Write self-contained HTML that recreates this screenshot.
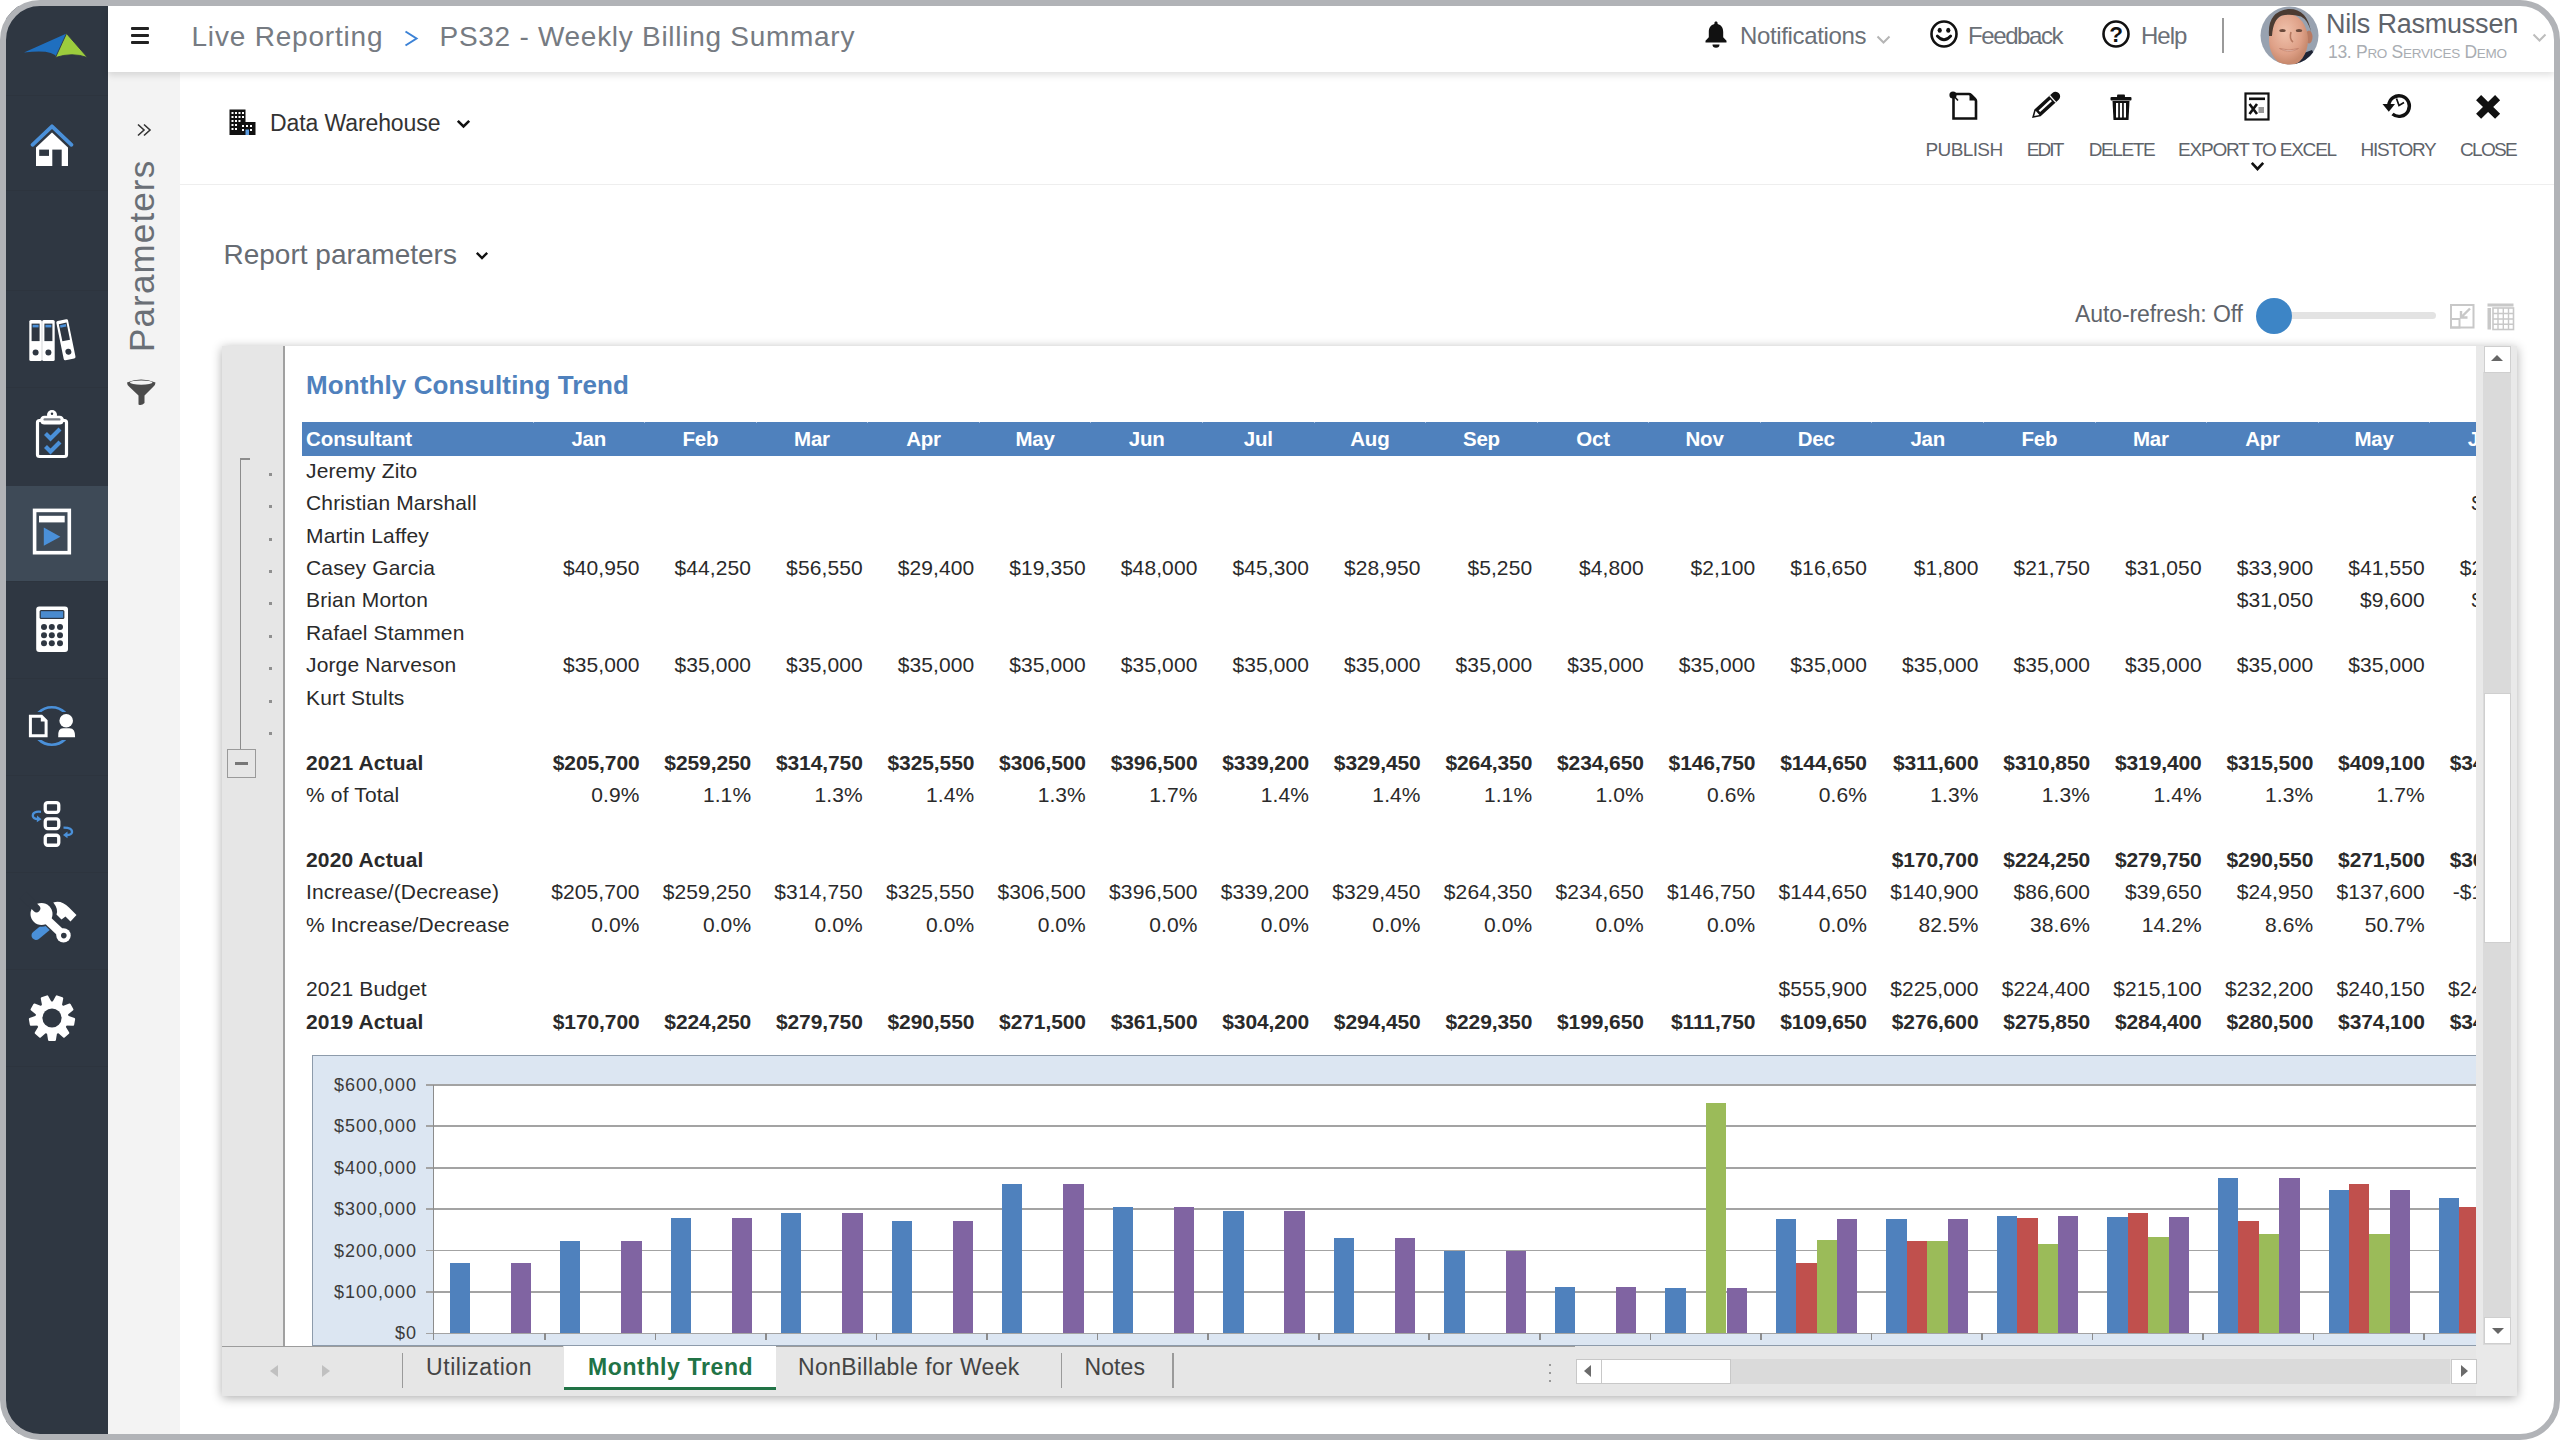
<!DOCTYPE html>
<html><head><meta charset="utf-8"><style>
html,body{margin:0;padding:0;width:2560px;height:1440px;overflow:hidden;background:#fff;}
#frame{position:absolute;left:0;top:0;width:2560px;height:1440px;border-radius:40px;overflow:hidden;background:#fff;}
#border{position:absolute;left:0;top:0;width:2548px;height:1428px;border:6px solid #b1b3b7;border-radius:40px;z-index:50;pointer-events:none;}
.t{position:absolute;white-space:nowrap;line-height:1;font-family:"Liberation Sans", sans-serif;}
svg{position:absolute;overflow:visible;}
</style></head><body>
<div id="frame">
<div style="position:absolute;left:6px;top:6px;width:102px;height:1428px;background:#2f3742;"></div>
<div style="position:absolute;left:108px;top:72px;width:72px;height:1362px;background:#f3f3f3;"></div>
<div style="position:absolute;left:108px;top:6px;width:2446px;height:66px;background:#fff;box-shadow:0 3px 7px rgba(0,0,0,0.13);z-index:2;"></div>
<div style="position:absolute;left:6px;top:95px;width:102px;height:1px;background:#2c333d;opacity:0.7;"></div>
<div style="position:absolute;left:6px;top:190px;width:102px;height:1px;background:#2c333d;opacity:0.7;"></div>
<div style="position:absolute;left:6px;top:290px;width:102px;height:1px;background:#2c333d;opacity:0.7;"></div>
<div style="position:absolute;left:6px;top:387px;width:102px;height:1px;background:#2c333d;opacity:0.7;"></div>
<div style="position:absolute;left:6px;top:581px;width:102px;height:1px;background:#2c333d;opacity:0.7;"></div>
<div style="position:absolute;left:6px;top:678px;width:102px;height:1px;background:#2c333d;opacity:0.7;"></div>
<div style="position:absolute;left:6px;top:775px;width:102px;height:1px;background:#2c333d;opacity:0.7;"></div>
<div style="position:absolute;left:6px;top:872px;width:102px;height:1px;background:#2c333d;opacity:0.7;"></div>
<div style="position:absolute;left:6px;top:969px;width:102px;height:1px;background:#2c333d;opacity:0.7;"></div>
<div style="position:absolute;left:6px;top:1066px;width:102px;height:1px;background:#2c333d;opacity:0.7;"></div>
<div style="position:absolute;left:6px;top:486px;width:102px;height:95px;background:#3e4a57;"></div>
<div style="position:absolute;left:180px;top:184px;width:2374px;height:1px;background:#eeeeee;"></div>
<div style="position:absolute;left:131px;top:27px;width:18px;height:2.6px;background:#222;border-radius:1px;z-index:3;"></div>
<div style="position:absolute;left:131px;top:34px;width:18px;height:2.6px;background:#222;border-radius:1px;z-index:3;"></div>
<div style="position:absolute;left:131px;top:41px;width:18px;height:2.6px;background:#222;border-radius:1px;z-index:3;"></div>
<div class="t" style="left:191.50px;top:23.30px;font-size:28px;color:#767b82;font-weight:normal;z-index:3;letter-spacing:0.8px;">Live Reporting</div>
<svg style="left:404px;top:30px;z-index:3" width="14" height="17" viewBox="0 0 14 17"><path d="M1.5 1.5 L12.5 8.5 L1.5 15.5" fill="none" stroke="#3b82d6" stroke-width="2"/></svg>
<div class="t" style="left:439.50px;top:23.30px;font-size:28px;color:#767b82;font-weight:normal;z-index:3;letter-spacing:0.72px;">PS32 - Weekly Billing Summary</div>
<svg style="left:1704px;top:20px;z-index:3" width="24" height="28" viewBox="0 0 24 28">
<path d="M12 1.5c1 0 1.6.7 1.6 1.5v1c3.6.8 5.6 3.8 5.6 8v5.2l3.3 3.6v1.6H1.5v-1.6l3.3-3.6V12c0-4.2 2-7.2 5.6-8V3c0-.8.6-1.5 1.6-1.5z" fill="#111"/>
<path d="M8.5 24.5a3.5 3.2 0 0 0 7 0z" fill="#111"/></svg>
<div class="t" style="left:1740.00px;top:23.68px;font-size:24px;color:#6b7077;font-weight:normal;z-index:3;letter-spacing:-0.35px;">Notifications</div>
<svg style="left:1876px;top:35px;z-index:3" width="15" height="10" viewBox="0 0 15 10"><path d="M1.5 1.5 L7.5 7.5 L13.5 1.5" fill="none" stroke="#b5b5b5" stroke-width="2"/></svg>
<svg style="left:1930px;top:20px;z-index:3" width="28" height="28" viewBox="0 0 28 28">
<circle cx="14" cy="14" r="12.5" fill="none" stroke="#111" stroke-width="2.6"/>
<ellipse cx="9.7" cy="10.3" rx="2.1" ry="2.5" fill="#111"/><ellipse cx="18.3" cy="10.3" rx="2.1" ry="2.5" fill="#111"/>
<path d="M7.3 16 Q14 23.5 20.7 16" fill="none" stroke="#111" stroke-width="2.8" stroke-linecap="round"/></svg>
<div class="t" style="left:1968.00px;top:23.68px;font-size:24px;color:#6b7077;font-weight:normal;z-index:3;letter-spacing:-1.4px;">Feedback</div>
<svg style="left:2102px;top:20px;z-index:3" width="28" height="28" viewBox="0 0 28 28">
<circle cx="14" cy="14" r="12.5" fill="none" stroke="#111" stroke-width="2.6"/>
<text x="14.2" y="22.3" text-anchor="middle" font-family="Liberation Sans" font-weight="bold" font-size="22.5" fill="#111">?</text></svg>
<div class="t" style="left:2141.00px;top:23.68px;font-size:24px;color:#6b7077;font-weight:normal;z-index:3;letter-spacing:-1.0px;">Help</div>
<div style="position:absolute;left:2222px;top:18px;width:2px;height:35px;background:#9a9a9a;z-index:3;"></div>
<svg style="left:2259.5px;top:5.5px;z-index:3" width="59" height="59" viewBox="0 0 59 59">
<defs><clipPath id="av"><circle cx="29.5" cy="29.5" r="29"/></clipPath>
<radialGradient id="skin" cx="0.42" cy="0.35" r="0.6"><stop offset="0" stop-color="#f0c2ac"/><stop offset="0.7" stop-color="#dea087"/><stop offset="1" stop-color="#c98a6e"/></radialGradient></defs>
<g clip-path="url(#av)">
<rect width="59" height="59" fill="#98a2b0"/>
<path d="M36 50 L52 44 L60 60 L34 60 Z" fill="#1f2535"/>
<ellipse cx="49" cy="31" rx="3.5" ry="6.5" fill="#b87a62"/>
<ellipse cx="28.5" cy="34" rx="19.5" ry="26" fill="url(#skin)"/>
<path d="M9 30 Q7 6 28 3 Q47 2 51 26 Q48 14 41 10.5 Q31 7.5 22 9.5 Q13 13 12 30 Z" fill="#4b3b32"/>
<ellipse cx="22.5" cy="24.5" rx="3.2" ry="1.6" fill="#6b4a3c"/><ellipse cx="39" cy="24.5" rx="3.2" ry="1.6" fill="#6b4a3c"/>
<path d="M31 26 Q29 33 33 36" fill="none" stroke="#b57860" stroke-width="1.6"/>
<path d="M19.5 42.5 Q29 48 38.5 42.5 Q29 45.5 19.5 42.5 Z" fill="#f3d6cc" stroke="#c07f6a" stroke-width="0.8"/>
</g></svg>
<div class="t" style="left:2326.00px;top:11.14px;font-size:27px;color:#5f646b;font-weight:normal;z-index:3;letter-spacing:-0.22px;">Nils Rasmussen</div>
<div class="t" style="left:2328.00px;top:43.69px;font-size:17.5px;color:#a9adb2;font-weight:normal;z-index:3;letter-spacing:-0.3px;">13. P<span style="font-size:13.5px">RO</span> S<span style="font-size:13.5px">ERVICES</span> D<span style="font-size:13.5px">EMO</span></div>
<svg style="left:2532px;top:33px;z-index:3" width="15" height="10" viewBox="0 0 15 10"><path d="M1.5 1.5 L7.5 7.5 L13.5 1.5" fill="none" stroke="#bdbdbd" stroke-width="2"/></svg>
<svg style="left:136px;top:123px" width="16" height="14" viewBox="0 0 16 14"><path d="M2 1.5 L8 7 L2 12.5 M8 1.5 L14 7 L8 12.5" fill="none" stroke="#333" stroke-width="1.6"/></svg>
<div class="t" style="left:124.37px;top:352px;font-size:35px;color:#6a6f76;transform-origin:0 0;transform:rotate(-90deg) translateX(0);letter-spacing:1.14px;">Parameters</div>
<svg style="left:126px;top:377px" width="31" height="30" viewBox="0 0 31 30">
<path d="M1 5.5 Q15 -0.5 29.5 5.5 Q29.5 7.5 27.5 9.5 L18.5 18.5 L18.5 26 Q15.5 29 12.5 27.5 L12.5 18.5 L3 9.5 Q1 7.5 1 5.5 Z" fill="#4b4b4b"/>
<ellipse cx="15.2" cy="5.6" rx="11.3" ry="2.1" fill="#f4f4f4"/></svg>
<svg style="left:229px;top:109px" width="27" height="27" viewBox="0 0 27 27">
<rect x="0.5" y="0.5" width="16" height="25.5" fill="#111"/>
<rect x="11" y="13" width="15.5" height="13" fill="#111"/>
<g fill="#fff">
<rect x="2.5" y="3" width="2" height="2"/><rect x="6" y="3" width="2" height="2"/><rect x="9.5" y="3" width="2" height="2"/><rect x="13" y="3" width="2" height="2"/>
<rect x="2.5" y="7" width="2" height="2"/><rect x="6" y="7" width="2" height="2"/><rect x="9.5" y="7" width="2" height="2"/><rect x="13" y="7" width="2" height="2"/>
<rect x="2.5" y="11" width="2" height="2"/><rect x="6" y="11" width="2" height="2"/><rect x="9.5" y="11" width="2" height="2"/>
<rect x="2.5" y="15" width="2" height="2"/><rect x="6" y="15" width="2" height="2"/>
<rect x="2.5" y="19" width="2" height="2"/><rect x="6" y="19" width="2" height="2"/>
<rect x="13" y="16" width="2" height="2"/><rect x="17" y="16" width="2" height="2"/><rect x="21" y="16" width="2" height="2"/>
<rect x="13" y="20" width="2" height="2"/><rect x="21" y="20" width="2" height="2"/>
</g><rect x="16.5" y="20.5" width="3.5" height="5.5" fill="#5b9be0"/></svg>
<div class="t" style="left:270.00px;top:111.53px;font-size:23px;color:#333;font-weight:normal;letter-spacing:-0.1px;">Data Warehouse</div>
<svg style="left:456px;top:119px" width="15" height="10" viewBox="0 0 15 10"><path d="M1.8 1.8 L7.5 7.5 L13.2 1.8" fill="none" stroke="#111" stroke-width="2.6"/></svg>
<div class="t" style="left:1864.00px;width:200px;text-align:center;top:139.52px;font-size:19px;color:#5f646b;font-weight:normal;letter-spacing:-0.6px;">PUBLISH</div>
<div class="t" style="left:1994.50px;width:100px;text-align:center;top:139.52px;font-size:19px;color:#5f646b;font-weight:normal;letter-spacing:-1.9px;">EDIT</div>
<div class="t" style="left:2071.50px;width:100px;text-align:center;top:139.52px;font-size:19px;color:#5f646b;font-weight:normal;letter-spacing:-1.4px;">DELETE</div>
<div class="t" style="left:2147.00px;width:220px;text-align:center;top:139.52px;font-size:19px;color:#5f646b;font-weight:normal;letter-spacing:-1.2px;">EXPORT TO EXCEL</div>
<div class="t" style="left:2338.00px;width:120px;text-align:center;top:139.52px;font-size:19px;color:#5f646b;font-weight:normal;letter-spacing:-1.27px;">HISTORY</div>
<div class="t" style="left:2438.00px;width:100px;text-align:center;top:139.52px;font-size:19px;color:#5f646b;font-weight:normal;letter-spacing:-1.7px;">CLOSE</div>
<svg style="left:1948px;top:90px" width="30" height="31" viewBox="0 0 30 31">
<path d="M5.5 4 H21 Q22 4 23 5 L27 9 Q28 10 28 11 V28.5 H5.5 Z" fill="none" stroke="#111" stroke-width="2.6"/>
<path d="M21.5 4.5 V10.5 H27.5 Z" fill="#111"/>
<circle cx="5" cy="5" r="3.6" fill="#111"/><path d="M5 5 L10 10.5" stroke="#111" stroke-width="1.6"/></svg>
<svg style="left:2030px;top:92px" width="30" height="28" viewBox="0 0 30 28">
<g transform="translate(2 26) rotate(-42.6)">
<path d="M0 0 L7.5 -4.6 H32 A4.6 4.6 0 0 1 32 4.6 H7.5 Z" fill="#111"/>
<path d="M3 0 L7.5 -2.8 V2.8 Z" fill="#fff"/>
<rect x="10" y="-1.1" width="16" height="2.2" fill="#fff"/>
<rect x="27.5" y="-4.6" width="1.3" height="9.2" fill="#fff"/>
</g></svg>
<svg style="left:2110px;top:94px" width="22" height="27" viewBox="0 0 22 27">
<rect x="0.5" y="3" width="21" height="3.5" rx="1" fill="#111"/><rect x="7" y="0.5" width="8" height="3" rx="1" fill="#111"/>
<path d="M2.5 7 H19.5 L18.5 26 H3.5 Z" fill="#111"/>
<rect x="6" y="9" width="2.2" height="14.5" fill="#fff"/><rect x="9.9" y="9" width="2.2" height="14.5" fill="#fff"/><rect x="13.8" y="9" width="2.2" height="14.5" fill="#fff"/></svg>
<svg style="left:2244px;top:92px" width="26" height="29" viewBox="0 0 26 29">
<rect x="1.5" y="1.5" width="23" height="26" fill="none" stroke="#111" stroke-width="2.2"/>
<rect x="5" y="5.5" width="16" height="2.6" fill="#111"/>
<path d="M5.5 12 L13 22 M13 12 L5.5 22" stroke="#111" stroke-width="2.6"/>
<rect x="14.5" y="15" width="5.5" height="6" fill="#999"/></svg>
<svg style="left:2250px;top:161px" width="15" height="11" viewBox="0 0 15 11"><path d="M1.8 1.8 L7.5 8 L13.2 1.8" fill="none" stroke="#111" stroke-width="2.6"/></svg>
<svg style="left:2382px;top:93px" width="30" height="26" viewBox="0 0 30 26">
<path d="M6.8 12.5 A10.3 10.3 0 1 1 10.5 21" fill="none" stroke="#111" stroke-width="3.4"/>
<path d="M0.5 11 L13 11 L6.8 18.8 Z" fill="#111"/>
<path d="M14.5 5.5 L17 12.5 L22 9.5" fill="none" stroke="#111" stroke-width="1.7"/></svg>
<svg style="left:2475.5px;top:94.5px" width="25" height="24" viewBox="0 0 25 24">
<path d="M2.6 2.6 L21.6 21.2 M21.6 2.6 L2.6 21.2" stroke="#111" stroke-width="7.2" stroke-linecap="butt"/></svg>
<div class="t" style="left:223.50px;top:240.60px;font-size:28px;color:#676c73;font-weight:normal;letter-spacing:0px;">Report parameters</div>
<svg style="left:475px;top:251px" width="14" height="10" viewBox="0 0 14 10"><path d="M1.8 1.8 L7 7 L12.2 1.8" fill="none" stroke="#111" stroke-width="2.4"/></svg>
<div class="t" style="left:2075.00px;top:303.03px;font-size:23px;color:#5f646b;font-weight:normal;letter-spacing:-0.1px;">Auto-refresh: Off</div>
<div style="position:absolute;left:2285px;top:312px;width:151px;height:7px;background:#e3e3e3;border-radius:4px;"></div>
<div style="position:absolute;left:2256px;top:297.5px;width:36px;height:36px;background:#3d85c6;border-radius:50%;"></div>
<svg style="left:2450px;top:304px" width="25" height="25" viewBox="0 0 25 25">
<rect x="1" y="1" width="22.5" height="22.5" fill="none" stroke="#c8c8c8" stroke-width="2"/>
<rect x="1" y="15" width="8.5" height="8.5" fill="none" stroke="#c8c8c8" stroke-width="2"/>
<path d="M20 4.5 L11 13.5 M11 7 V13.5 H17.5" fill="none" stroke="#c8c8c8" stroke-width="2.4"/></svg>
<svg style="left:2487px;top:303px" width="27" height="27" viewBox="0 0 27 27">
<rect x="0.5" y="0.5" width="26" height="3" fill="#c8c8c8"/>
<rect x="0.5" y="5" width="3.5" height="21.5" fill="#c8c8c8"/>
<rect x="6" y="5" width="20.5" height="21.5" fill="none" stroke="#c8c8c8" stroke-width="1.6"/>
<path d="M6 10.5 H26.5 M6 16 H26.5 M6 21.3 H26.5 M11 5 V26.5 M16.3 5 V26.5 M21.5 5 V26.5" stroke="#c8c8c8" stroke-width="1.4"/></svg>
<svg style="left:22px;top:32px" width="68" height="28" viewBox="0 0 68 28">
<path d="M44.5 1.5 L35 25 Q30 17 2 20.5 Z" fill="#1f6fbf"/>
<path d="M44.5 1.5 L65.5 25.5 Q50 20 33.5 25.5 Z" fill="#9ccc3d" stroke="#2f3742" stroke-width="0.9"/></svg>
<svg style="left:29px;top:122px" width="46" height="46" viewBox="0 0 46 46">
<path d="M3.5 22.8 L23 4.3 L42.5 22.8" fill="none" stroke="#4a90d9" stroke-width="3.8" stroke-linecap="round" stroke-linejoin="round"/>
<path d="M7 25.5 L23 10.5 L39 25.5 V44 H7 Z" fill="#fff"/>
<rect x="10.2" y="27.6" width="9.8" height="6.3" fill="#2f3742"/>
<rect x="23.3" y="27.6" width="9.4" height="16.5" fill="#2f3742"/></svg>
<svg style="left:28px;top:318px" width="52" height="46" viewBox="0 0 52 46">
<g fill="#fff"><rect x="1.3" y="2" width="12.6" height="41" rx="1.6"/><rect x="14.1" y="2" width="12.6" height="41" rx="1.6"/></g>
<g fill="#2f3742"><rect x="3.6" y="5.6" width="8" height="17.5"/><rect x="16.4" y="5.6" width="8" height="17.5"/>
<circle cx="7.6" cy="34.5" r="3"/><circle cx="20.4" cy="34.5" r="3"/></g>
<g fill="#4a90d9"><rect x="4.6" y="6.8" width="6" height="2.6"/><rect x="17.4" y="6.8" width="6" height="2.6"/></g>
<g transform="translate(28 3.3) rotate(-11.6)">
<rect x="0" y="0" width="12" height="40" rx="1.6" fill="#fff"/>
<rect x="2.2" y="3.4" width="7.8" height="17.5" fill="#2f3742"/>
<rect x="3.1" y="4.6" width="6" height="2.6" fill="#4a90d9"/>
<circle cx="6" cy="32.3" r="3" fill="#2f3742"/></g></svg>
<svg style="left:35px;top:409px" width="34" height="50" viewBox="0 0 34 50">
<rect x="2.5" y="11.5" width="29" height="36" rx="2" fill="none" stroke="#fff" stroke-width="3.2"/>
<rect x="5" y="6.8" width="24" height="8.6" rx="4.3" fill="#fff"/>
<circle cx="17" cy="6" r="5" fill="#fff"/>
<circle cx="17" cy="4.8" r="1.2" fill="#2f3742"/>
<rect x="8.5" y="9.2" width="17" height="2.4" rx="1.2" fill="#7a7f86"/>
<path d="M10.5 24.5 L15.5 29.5 L25 20 M10.5 37.5 L15.5 42.5 L25 33" fill="none" stroke="#4a90d9" stroke-width="4.2"/></svg>
<svg style="left:32px;top:508px" width="40" height="48" viewBox="0 0 40 48">
<rect x="2.6" y="2.4" width="34.7" height="42.3" fill="none" stroke="#fff" stroke-width="3.6"/>
<rect x="7" y="7.8" width="25.7" height="6.6" fill="#fff"/>
<path d="M11.8 19.6 L28.4 28.7 L11.8 37.8 Z" fill="#4a90d9"/></svg>
<svg style="left:35px;top:605px" width="34" height="48" viewBox="0 0 34 48">
<rect x="1.2" y="1.4" width="31.8" height="45.5" rx="3" fill="#fff"/>
<rect x="4.6" y="5" width="24.8" height="9" rx="1.5" fill="#2f3742"/>
<rect x="5.8" y="6.2" width="22.4" height="6.6" fill="#4a8bcf"/>
<g fill="#2f3742">
<circle cx="9" cy="22.1" r="3"/><circle cx="16.8" cy="22.1" r="3"/><circle cx="25" cy="22.1" r="3"/>
<circle cx="9" cy="30.3" r="3"/><circle cx="16.8" cy="30.3" r="3"/><circle cx="25" cy="30.3" r="3"/>
<circle cx="9" cy="38.3" r="3"/><circle cx="16.8" cy="38.3" r="3"/><circle cx="25" cy="38.3" r="3"/></g></svg>
<svg style="left:27px;top:704px" width="52" height="46" viewBox="0 0 52 46">
<circle cx="24.8" cy="22" r="18.8" fill="none" stroke="#4a90d9" stroke-width="2.6"/>
<path d="M0 8 H22.5 V36 H0 Z" fill="#2f3742"/>
<path d="M29 8 H51 V36 H29 Z" fill="#2f3742"/>
<path d="M3.4 12.2 H14.5 L19.1 16.8 V31.8 H3.4 Z" fill="none" stroke="#fff" stroke-width="3"/>
<path d="M13.8 12.5 V17.5 H19" fill="#fff"/>
<circle cx="39.2" cy="16.7" r="6.8" fill="#fff"/>
<path d="M31.2 33.3 Q30.5 24.2 36 24.2 H42.5 Q48.5 24.2 48.1 33.3 Z" fill="#fff"/></svg>
<svg style="left:30px;top:800px" width="46" height="48" viewBox="0 0 46 48">
<g fill="none" stroke="#fff" stroke-width="3.3">
<rect x="15.25" y="2.55" width="13.5" height="9.8" rx="2.5"/><rect x="15.25" y="18.95" width="13.5" height="9.6" rx="2.5"/><rect x="15.25" y="35.25" width="13.5" height="10" rx="2.5"/></g>
<path d="M11 11.8 Q2.5 11 2.8 16 Q3.5 19.2 8.5 19" fill="none" stroke="#4a90d9" stroke-width="2.3"/><path d="M7 15.5 L11.5 19.3 L6.8 22.3 Z" fill="#4a90d9"/>
<path d="M33.5 27.6 Q42.5 27.5 42 32.5 Q41.2 35.2 36 35" fill="none" stroke="#4a90d9" stroke-width="2.3"/><path d="M37.5 31.5 L33 35 L37.5 38.3 Z" fill="#4a90d9"/></svg>
<svg style="left:20px;top:890px" width="64" height="60" viewBox="0 0 64 60">
<path d="M33.3 12.5 Q41 9.5 49 17.5 L52 20.5 L56.5 25 L50.5 31.5 L45.5 26.5 L41.5 29.5 L36.5 24.5 Q38.5 19 33.3 12.5 Z" fill="#fff"/>
<path d="M16 45.5 L27.5 36" stroke="#4a90d9" stroke-width="9" stroke-linecap="round"/>
<g stroke="#2f3742" stroke-width="1.6">
<path d="M22 25 L43.5 45.4" stroke-width="11"/>
<circle cx="43.5" cy="45.4" r="8.2" fill="#2f3742"/>
<circle cx="21.5" cy="24" r="12" fill="#2f3742"/></g>
<path d="M22 25 L43.5 45.4" stroke="#fff" stroke-width="8.5"/>
<circle cx="43.5" cy="45.4" r="7.2" fill="#fff"/>
<circle cx="43.8" cy="45.6" r="2.8" fill="#2f3742"/>
<circle cx="21.5" cy="24" r="11" fill="#fff"/>
<path d="M8 10 L16.5 18.5" stroke="#2f3742" stroke-width="7.5" stroke-linecap="round"/>
<path d="M3 5 L11 13" stroke="#2f3742" stroke-width="9"/>
</svg>
<svg style="left:28px;top:994px" width="48" height="48" viewBox="0 0 48 48">
<g transform="translate(24 24)" fill="#fff">
<circle r="16.5"/><path d="M-5.2 -14 L-3.9 -22.2 Q-3.6 -23 -2.8 -23 L2.8 -23 Q3.6 -23 3.9 -22.2 L5.2 -14 Z" transform="rotate(180)"/><path d="M-5.2 -14 L-3.9 -22.2 Q-3.6 -23 -2.8 -23 L2.8 -23 Q3.6 -23 3.9 -22.2 L5.2 -14 Z" transform="rotate(220)"/><path d="M-5.2 -14 L-3.9 -22.2 Q-3.6 -23 -2.8 -23 L2.8 -23 Q3.6 -23 3.9 -22.2 L5.2 -14 Z" transform="rotate(260)"/><path d="M-5.2 -14 L-3.9 -22.2 Q-3.6 -23 -2.8 -23 L2.8 -23 Q3.6 -23 3.9 -22.2 L5.2 -14 Z" transform="rotate(300)"/><path d="M-5.2 -14 L-3.9 -22.2 Q-3.6 -23 -2.8 -23 L2.8 -23 Q3.6 -23 3.9 -22.2 L5.2 -14 Z" transform="rotate(340)"/><path d="M-5.2 -14 L-3.9 -22.2 Q-3.6 -23 -2.8 -23 L2.8 -23 Q3.6 -23 3.9 -22.2 L5.2 -14 Z" transform="rotate(20)"/><path d="M-5.2 -14 L-3.9 -22.2 Q-3.6 -23 -2.8 -23 L2.8 -23 Q3.6 -23 3.9 -22.2 L5.2 -14 Z" transform="rotate(60)"/><path d="M-5.2 -14 L-3.9 -22.2 Q-3.6 -23 -2.8 -23 L2.8 -23 Q3.6 -23 3.9 -22.2 L5.2 -14 Z" transform="rotate(100)"/><path d="M-5.2 -14 L-3.9 -22.2 Q-3.6 -23 -2.8 -23 L2.8 -23 Q3.6 -23 3.9 -22.2 L5.2 -14 Z" transform="rotate(140)"/>
<circle r="9.6" fill="#2f3742"/></g></svg>
<div style="position:absolute;left:222px;top:346px;width:2295px;height:1050px;background:#fff;box-shadow:0 2px 10px rgba(0,0,0,0.32);"></div>
<div style="position:absolute;left:222px;top:346px;width:62px;height:1000px;background:#e6e6e6;"></div>
<div style="position:absolute;left:283px;top:346px;width:1.6px;height:1000px;background:#a0a0a0;"></div>
<div style="position:absolute;left:2476px;top:346px;width:41px;height:1000px;background:#e9e9e9;"></div>
<div style="position:absolute;left:2483px;top:372px;width:28px;height:973px;background:#dadada;"></div>
<div style="position:absolute;left:2484px;top:693px;width:27px;height:250px;background:#fff;border:1px solid #cfcfcf;box-sizing:border-box;"></div>
<div style="position:absolute;left:2484px;top:346px;width:27px;height:27px;background:#fff;border:1px solid #cfcfcf;box-sizing:border-box;"></div>
<svg style="left:2490px;top:354px" width="14" height="8" viewBox="0 0 14 8"><path d="M1 7 L7 1 L13 7Z" fill="#666"/></svg>
<div style="position:absolute;left:2484px;top:1317px;width:27px;height:27px;background:#fff;border:1px solid #cfcfcf;box-sizing:border-box;"></div>
<svg style="left:2491px;top:1327px" width="14" height="8" viewBox="0 0 14 8"><path d="M1 1 L7 7 L13 1Z" fill="#666"/></svg>
<div style="position:absolute;left:285px;top:346px;width:2191px;height:1000px;overflow:hidden;">
<div class="t" style="left:21.00px;top:25.99px;font-size:26px;color:#4f81bd;font-weight:bold;letter-spacing:0.1px;">Monthly Consulting Trend</div>
<div style="position:absolute;left:16.69999999999999px;top:75.5px;width:2200px;height:34.2px;background:#4f81bd;"></div>
<div class="t" style="left:21.00px;top:82.65px;font-size:20.5px;color:#fff;font-weight:bold;letter-spacing:-0.1px;">Consultant</div>
<div class="t" style="left:248.79px;width:110px;text-align:center;top:82.65px;font-size:20.5px;color:#fff;font-weight:bold;letter-spacing:-0.2px;">Jan</div>
<div class="t" style="left:360.37px;width:110px;text-align:center;top:82.65px;font-size:20.5px;color:#fff;font-weight:bold;letter-spacing:-0.2px;">Feb</div>
<div class="t" style="left:471.95px;width:110px;text-align:center;top:82.65px;font-size:20.5px;color:#fff;font-weight:bold;letter-spacing:-0.2px;">Mar</div>
<div class="t" style="left:583.53px;width:110px;text-align:center;top:82.65px;font-size:20.5px;color:#fff;font-weight:bold;letter-spacing:-0.2px;">Apr</div>
<div class="t" style="left:695.11px;width:110px;text-align:center;top:82.65px;font-size:20.5px;color:#fff;font-weight:bold;letter-spacing:-0.2px;">May</div>
<div class="t" style="left:806.69px;width:110px;text-align:center;top:82.65px;font-size:20.5px;color:#fff;font-weight:bold;letter-spacing:-0.2px;">Jun</div>
<div class="t" style="left:918.27px;width:110px;text-align:center;top:82.65px;font-size:20.5px;color:#fff;font-weight:bold;letter-spacing:-0.2px;">Jul</div>
<div class="t" style="left:1029.85px;width:110px;text-align:center;top:82.65px;font-size:20.5px;color:#fff;font-weight:bold;letter-spacing:-0.2px;">Aug</div>
<div class="t" style="left:1141.43px;width:110px;text-align:center;top:82.65px;font-size:20.5px;color:#fff;font-weight:bold;letter-spacing:-0.2px;">Sep</div>
<div class="t" style="left:1253.01px;width:110px;text-align:center;top:82.65px;font-size:20.5px;color:#fff;font-weight:bold;letter-spacing:-0.2px;">Oct</div>
<div class="t" style="left:1364.59px;width:110px;text-align:center;top:82.65px;font-size:20.5px;color:#fff;font-weight:bold;letter-spacing:-0.2px;">Nov</div>
<div class="t" style="left:1476.17px;width:110px;text-align:center;top:82.65px;font-size:20.5px;color:#fff;font-weight:bold;letter-spacing:-0.2px;">Dec</div>
<div class="t" style="left:1587.75px;width:110px;text-align:center;top:82.65px;font-size:20.5px;color:#fff;font-weight:bold;letter-spacing:-0.2px;">Jan</div>
<div class="t" style="left:1699.33px;width:110px;text-align:center;top:82.65px;font-size:20.5px;color:#fff;font-weight:bold;letter-spacing:-0.2px;">Feb</div>
<div class="t" style="left:1810.91px;width:110px;text-align:center;top:82.65px;font-size:20.5px;color:#fff;font-weight:bold;letter-spacing:-0.2px;">Mar</div>
<div class="t" style="left:1922.49px;width:110px;text-align:center;top:82.65px;font-size:20.5px;color:#fff;font-weight:bold;letter-spacing:-0.2px;">Apr</div>
<div class="t" style="left:2034.07px;width:110px;text-align:center;top:82.65px;font-size:20.5px;color:#fff;font-weight:bold;letter-spacing:-0.2px;">May</div>
<div class="t" style="left:2145.65px;width:110px;text-align:center;top:82.65px;font-size:20.5px;color:#fff;font-weight:bold;letter-spacing:-0.2px;">Jun</div>
<div style="position:absolute;left:247.5px;top:75.5px;width:1px;height:1.5px;background:#9fbbe0;"></div>
<div style="position:absolute;left:359.08000000000004px;top:75.5px;width:1px;height:1.5px;background:#9fbbe0;"></div>
<div style="position:absolute;left:470.65999999999997px;top:75.5px;width:1px;height:1.5px;background:#9fbbe0;"></div>
<div style="position:absolute;left:582.24px;top:75.5px;width:1px;height:1.5px;background:#9fbbe0;"></div>
<div style="position:absolute;left:693.8199999999999px;top:75.5px;width:1px;height:1.5px;background:#9fbbe0;"></div>
<div style="position:absolute;left:805.4000000000001px;top:75.5px;width:1px;height:1.5px;background:#9fbbe0;"></div>
<div style="position:absolute;left:916.98px;top:75.5px;width:1px;height:1.5px;background:#9fbbe0;"></div>
<div style="position:absolute;left:1028.56px;top:75.5px;width:1px;height:1.5px;background:#9fbbe0;"></div>
<div style="position:absolute;left:1140.1399999999999px;top:75.5px;width:1px;height:1.5px;background:#9fbbe0;"></div>
<div style="position:absolute;left:1251.72px;top:75.5px;width:1px;height:1.5px;background:#9fbbe0;"></div>
<div style="position:absolute;left:1363.3px;top:75.5px;width:1px;height:1.5px;background:#9fbbe0;"></div>
<div style="position:absolute;left:1474.8799999999999px;top:75.5px;width:1px;height:1.5px;background:#9fbbe0;"></div>
<div style="position:absolute;left:1586.46px;top:75.5px;width:1px;height:1.5px;background:#9fbbe0;"></div>
<div style="position:absolute;left:1698.04px;top:75.5px;width:1px;height:1.5px;background:#9fbbe0;"></div>
<div style="position:absolute;left:1809.62px;top:75.5px;width:1px;height:1.5px;background:#9fbbe0;"></div>
<div style="position:absolute;left:1921.1999999999998px;top:75.5px;width:1px;height:1.5px;background:#9fbbe0;"></div>
<div style="position:absolute;left:2032.7799999999997px;top:75.5px;width:1px;height:1.5px;background:#9fbbe0;"></div>
<div style="position:absolute;left:2144.3599999999997px;top:75.5px;width:1px;height:1.5px;background:#9fbbe0;"></div>
<div style="position:absolute;left:2255.94px;top:75.5px;width:1px;height:1.5px;background:#9fbbe0;"></div>
<div class="t" style="left:21.00px;top:113.72px;font-size:21px;color:#2a2a2a;font-weight:normal;letter-spacing:0.15px;">Jeremy Zito</div>
<div class="t" style="left:21.00px;top:146.14px;font-size:21px;color:#2a2a2a;font-weight:normal;letter-spacing:0.15px;">Christian Marshall</div>
<div class="t" style="left:2143.44px;width:108px;text-align:right;top:146.14px;font-size:21px;color:#2a2a2a;font-weight:normal;letter-spacing:0.1px;">$5,250</div>
<div class="t" style="left:21.00px;top:178.56px;font-size:21px;color:#2a2a2a;font-weight:normal;letter-spacing:0.15px;">Martin Laffey</div>
<div class="t" style="left:21.00px;top:210.98px;font-size:21px;color:#2a2a2a;font-weight:normal;letter-spacing:0.15px;">Casey Garcia</div>
<div class="t" style="left:246.58px;width:108px;text-align:right;top:210.98px;font-size:21px;color:#2a2a2a;font-weight:normal;letter-spacing:0.1px;">$40,950</div>
<div class="t" style="left:358.16px;width:108px;text-align:right;top:210.98px;font-size:21px;color:#2a2a2a;font-weight:normal;letter-spacing:0.1px;">$44,250</div>
<div class="t" style="left:469.74px;width:108px;text-align:right;top:210.98px;font-size:21px;color:#2a2a2a;font-weight:normal;letter-spacing:0.1px;">$56,550</div>
<div class="t" style="left:581.32px;width:108px;text-align:right;top:210.98px;font-size:21px;color:#2a2a2a;font-weight:normal;letter-spacing:0.1px;">$29,400</div>
<div class="t" style="left:692.90px;width:108px;text-align:right;top:210.98px;font-size:21px;color:#2a2a2a;font-weight:normal;letter-spacing:0.1px;">$19,350</div>
<div class="t" style="left:804.48px;width:108px;text-align:right;top:210.98px;font-size:21px;color:#2a2a2a;font-weight:normal;letter-spacing:0.1px;">$48,000</div>
<div class="t" style="left:916.06px;width:108px;text-align:right;top:210.98px;font-size:21px;color:#2a2a2a;font-weight:normal;letter-spacing:0.1px;">$45,300</div>
<div class="t" style="left:1027.64px;width:108px;text-align:right;top:210.98px;font-size:21px;color:#2a2a2a;font-weight:normal;letter-spacing:0.1px;">$28,950</div>
<div class="t" style="left:1139.22px;width:108px;text-align:right;top:210.98px;font-size:21px;color:#2a2a2a;font-weight:normal;letter-spacing:0.1px;">$5,250</div>
<div class="t" style="left:1250.80px;width:108px;text-align:right;top:210.98px;font-size:21px;color:#2a2a2a;font-weight:normal;letter-spacing:0.1px;">$4,800</div>
<div class="t" style="left:1362.38px;width:108px;text-align:right;top:210.98px;font-size:21px;color:#2a2a2a;font-weight:normal;letter-spacing:0.1px;">$2,100</div>
<div class="t" style="left:1473.96px;width:108px;text-align:right;top:210.98px;font-size:21px;color:#2a2a2a;font-weight:normal;letter-spacing:0.1px;">$16,650</div>
<div class="t" style="left:1585.54px;width:108px;text-align:right;top:210.98px;font-size:21px;color:#2a2a2a;font-weight:normal;letter-spacing:0.1px;">$1,800</div>
<div class="t" style="left:1697.12px;width:108px;text-align:right;top:210.98px;font-size:21px;color:#2a2a2a;font-weight:normal;letter-spacing:0.1px;">$21,750</div>
<div class="t" style="left:1808.70px;width:108px;text-align:right;top:210.98px;font-size:21px;color:#2a2a2a;font-weight:normal;letter-spacing:0.1px;">$31,050</div>
<div class="t" style="left:1920.28px;width:108px;text-align:right;top:210.98px;font-size:21px;color:#2a2a2a;font-weight:normal;letter-spacing:0.1px;">$33,900</div>
<div class="t" style="left:2031.86px;width:108px;text-align:right;top:210.98px;font-size:21px;color:#2a2a2a;font-weight:normal;letter-spacing:0.1px;">$41,550</div>
<div class="t" style="left:2143.44px;width:108px;text-align:right;top:210.98px;font-size:21px;color:#2a2a2a;font-weight:normal;letter-spacing:0.1px;">$25,200</div>
<div class="t" style="left:21.00px;top:243.40px;font-size:21px;color:#2a2a2a;font-weight:normal;letter-spacing:0.15px;">Brian Morton</div>
<div class="t" style="left:1920.28px;width:108px;text-align:right;top:243.40px;font-size:21px;color:#2a2a2a;font-weight:normal;letter-spacing:0.1px;">$31,050</div>
<div class="t" style="left:2031.86px;width:108px;text-align:right;top:243.40px;font-size:21px;color:#2a2a2a;font-weight:normal;letter-spacing:0.1px;">$9,600</div>
<div class="t" style="left:2143.44px;width:108px;text-align:right;top:243.40px;font-size:21px;color:#2a2a2a;font-weight:normal;letter-spacing:0.1px;">$7,200</div>
<div class="t" style="left:21.00px;top:275.82px;font-size:21px;color:#2a2a2a;font-weight:normal;letter-spacing:0.15px;">Rafael Stammen</div>
<div class="t" style="left:21.00px;top:308.24px;font-size:21px;color:#2a2a2a;font-weight:normal;letter-spacing:0.15px;">Jorge Narveson</div>
<div class="t" style="left:246.58px;width:108px;text-align:right;top:308.24px;font-size:21px;color:#2a2a2a;font-weight:normal;letter-spacing:0.1px;">$35,000</div>
<div class="t" style="left:358.16px;width:108px;text-align:right;top:308.24px;font-size:21px;color:#2a2a2a;font-weight:normal;letter-spacing:0.1px;">$35,000</div>
<div class="t" style="left:469.74px;width:108px;text-align:right;top:308.24px;font-size:21px;color:#2a2a2a;font-weight:normal;letter-spacing:0.1px;">$35,000</div>
<div class="t" style="left:581.32px;width:108px;text-align:right;top:308.24px;font-size:21px;color:#2a2a2a;font-weight:normal;letter-spacing:0.1px;">$35,000</div>
<div class="t" style="left:692.90px;width:108px;text-align:right;top:308.24px;font-size:21px;color:#2a2a2a;font-weight:normal;letter-spacing:0.1px;">$35,000</div>
<div class="t" style="left:804.48px;width:108px;text-align:right;top:308.24px;font-size:21px;color:#2a2a2a;font-weight:normal;letter-spacing:0.1px;">$35,000</div>
<div class="t" style="left:916.06px;width:108px;text-align:right;top:308.24px;font-size:21px;color:#2a2a2a;font-weight:normal;letter-spacing:0.1px;">$35,000</div>
<div class="t" style="left:1027.64px;width:108px;text-align:right;top:308.24px;font-size:21px;color:#2a2a2a;font-weight:normal;letter-spacing:0.1px;">$35,000</div>
<div class="t" style="left:1139.22px;width:108px;text-align:right;top:308.24px;font-size:21px;color:#2a2a2a;font-weight:normal;letter-spacing:0.1px;">$35,000</div>
<div class="t" style="left:1250.80px;width:108px;text-align:right;top:308.24px;font-size:21px;color:#2a2a2a;font-weight:normal;letter-spacing:0.1px;">$35,000</div>
<div class="t" style="left:1362.38px;width:108px;text-align:right;top:308.24px;font-size:21px;color:#2a2a2a;font-weight:normal;letter-spacing:0.1px;">$35,000</div>
<div class="t" style="left:1473.96px;width:108px;text-align:right;top:308.24px;font-size:21px;color:#2a2a2a;font-weight:normal;letter-spacing:0.1px;">$35,000</div>
<div class="t" style="left:1585.54px;width:108px;text-align:right;top:308.24px;font-size:21px;color:#2a2a2a;font-weight:normal;letter-spacing:0.1px;">$35,000</div>
<div class="t" style="left:1697.12px;width:108px;text-align:right;top:308.24px;font-size:21px;color:#2a2a2a;font-weight:normal;letter-spacing:0.1px;">$35,000</div>
<div class="t" style="left:1808.70px;width:108px;text-align:right;top:308.24px;font-size:21px;color:#2a2a2a;font-weight:normal;letter-spacing:0.1px;">$35,000</div>
<div class="t" style="left:1920.28px;width:108px;text-align:right;top:308.24px;font-size:21px;color:#2a2a2a;font-weight:normal;letter-spacing:0.1px;">$35,000</div>
<div class="t" style="left:2031.86px;width:108px;text-align:right;top:308.24px;font-size:21px;color:#2a2a2a;font-weight:normal;letter-spacing:0.1px;">$35,000</div>
<div class="t" style="left:21.00px;top:340.66px;font-size:21px;color:#2a2a2a;font-weight:normal;letter-spacing:0.15px;">Kurt Stults</div>
<div class="t" style="left:21.00px;top:405.50px;font-size:21px;color:#2a2a2a;font-weight:bold;letter-spacing:0.15px;">2021 Actual</div>
<div class="t" style="left:246.58px;width:108px;text-align:right;top:405.50px;font-size:21px;color:#2a2a2a;font-weight:bold;letter-spacing:-0.1px;">$205,700</div>
<div class="t" style="left:358.16px;width:108px;text-align:right;top:405.50px;font-size:21px;color:#2a2a2a;font-weight:bold;letter-spacing:-0.1px;">$259,250</div>
<div class="t" style="left:469.74px;width:108px;text-align:right;top:405.50px;font-size:21px;color:#2a2a2a;font-weight:bold;letter-spacing:-0.1px;">$314,750</div>
<div class="t" style="left:581.32px;width:108px;text-align:right;top:405.50px;font-size:21px;color:#2a2a2a;font-weight:bold;letter-spacing:-0.1px;">$325,550</div>
<div class="t" style="left:692.90px;width:108px;text-align:right;top:405.50px;font-size:21px;color:#2a2a2a;font-weight:bold;letter-spacing:-0.1px;">$306,500</div>
<div class="t" style="left:804.48px;width:108px;text-align:right;top:405.50px;font-size:21px;color:#2a2a2a;font-weight:bold;letter-spacing:-0.1px;">$396,500</div>
<div class="t" style="left:916.06px;width:108px;text-align:right;top:405.50px;font-size:21px;color:#2a2a2a;font-weight:bold;letter-spacing:-0.1px;">$339,200</div>
<div class="t" style="left:1027.64px;width:108px;text-align:right;top:405.50px;font-size:21px;color:#2a2a2a;font-weight:bold;letter-spacing:-0.1px;">$329,450</div>
<div class="t" style="left:1139.22px;width:108px;text-align:right;top:405.50px;font-size:21px;color:#2a2a2a;font-weight:bold;letter-spacing:-0.1px;">$264,350</div>
<div class="t" style="left:1250.80px;width:108px;text-align:right;top:405.50px;font-size:21px;color:#2a2a2a;font-weight:bold;letter-spacing:-0.1px;">$234,650</div>
<div class="t" style="left:1362.38px;width:108px;text-align:right;top:405.50px;font-size:21px;color:#2a2a2a;font-weight:bold;letter-spacing:-0.1px;">$146,750</div>
<div class="t" style="left:1473.96px;width:108px;text-align:right;top:405.50px;font-size:21px;color:#2a2a2a;font-weight:bold;letter-spacing:-0.1px;">$144,650</div>
<div class="t" style="left:1585.54px;width:108px;text-align:right;top:405.50px;font-size:21px;color:#2a2a2a;font-weight:bold;letter-spacing:-0.1px;">$311,600</div>
<div class="t" style="left:1697.12px;width:108px;text-align:right;top:405.50px;font-size:21px;color:#2a2a2a;font-weight:bold;letter-spacing:-0.1px;">$310,850</div>
<div class="t" style="left:1808.70px;width:108px;text-align:right;top:405.50px;font-size:21px;color:#2a2a2a;font-weight:bold;letter-spacing:-0.1px;">$319,400</div>
<div class="t" style="left:1920.28px;width:108px;text-align:right;top:405.50px;font-size:21px;color:#2a2a2a;font-weight:bold;letter-spacing:-0.1px;">$315,500</div>
<div class="t" style="left:2031.86px;width:108px;text-align:right;top:405.50px;font-size:21px;color:#2a2a2a;font-weight:bold;letter-spacing:-0.1px;">$409,100</div>
<div class="t" style="left:2143.44px;width:108px;text-align:right;top:405.50px;font-size:21px;color:#2a2a2a;font-weight:bold;letter-spacing:-0.1px;">$346,000</div>
<div class="t" style="left:21.00px;top:437.92px;font-size:21px;color:#2a2a2a;font-weight:normal;letter-spacing:0.15px;">% of Total</div>
<div class="t" style="left:246.58px;width:108px;text-align:right;top:437.92px;font-size:21px;color:#2a2a2a;font-weight:normal;letter-spacing:0.1px;">0.9%</div>
<div class="t" style="left:358.16px;width:108px;text-align:right;top:437.92px;font-size:21px;color:#2a2a2a;font-weight:normal;letter-spacing:0.1px;">1.1%</div>
<div class="t" style="left:469.74px;width:108px;text-align:right;top:437.92px;font-size:21px;color:#2a2a2a;font-weight:normal;letter-spacing:0.1px;">1.3%</div>
<div class="t" style="left:581.32px;width:108px;text-align:right;top:437.92px;font-size:21px;color:#2a2a2a;font-weight:normal;letter-spacing:0.1px;">1.4%</div>
<div class="t" style="left:692.90px;width:108px;text-align:right;top:437.92px;font-size:21px;color:#2a2a2a;font-weight:normal;letter-spacing:0.1px;">1.3%</div>
<div class="t" style="left:804.48px;width:108px;text-align:right;top:437.92px;font-size:21px;color:#2a2a2a;font-weight:normal;letter-spacing:0.1px;">1.7%</div>
<div class="t" style="left:916.06px;width:108px;text-align:right;top:437.92px;font-size:21px;color:#2a2a2a;font-weight:normal;letter-spacing:0.1px;">1.4%</div>
<div class="t" style="left:1027.64px;width:108px;text-align:right;top:437.92px;font-size:21px;color:#2a2a2a;font-weight:normal;letter-spacing:0.1px;">1.4%</div>
<div class="t" style="left:1139.22px;width:108px;text-align:right;top:437.92px;font-size:21px;color:#2a2a2a;font-weight:normal;letter-spacing:0.1px;">1.1%</div>
<div class="t" style="left:1250.80px;width:108px;text-align:right;top:437.92px;font-size:21px;color:#2a2a2a;font-weight:normal;letter-spacing:0.1px;">1.0%</div>
<div class="t" style="left:1362.38px;width:108px;text-align:right;top:437.92px;font-size:21px;color:#2a2a2a;font-weight:normal;letter-spacing:0.1px;">0.6%</div>
<div class="t" style="left:1473.96px;width:108px;text-align:right;top:437.92px;font-size:21px;color:#2a2a2a;font-weight:normal;letter-spacing:0.1px;">0.6%</div>
<div class="t" style="left:1585.54px;width:108px;text-align:right;top:437.92px;font-size:21px;color:#2a2a2a;font-weight:normal;letter-spacing:0.1px;">1.3%</div>
<div class="t" style="left:1697.12px;width:108px;text-align:right;top:437.92px;font-size:21px;color:#2a2a2a;font-weight:normal;letter-spacing:0.1px;">1.3%</div>
<div class="t" style="left:1808.70px;width:108px;text-align:right;top:437.92px;font-size:21px;color:#2a2a2a;font-weight:normal;letter-spacing:0.1px;">1.4%</div>
<div class="t" style="left:1920.28px;width:108px;text-align:right;top:437.92px;font-size:21px;color:#2a2a2a;font-weight:normal;letter-spacing:0.1px;">1.3%</div>
<div class="t" style="left:2031.86px;width:108px;text-align:right;top:437.92px;font-size:21px;color:#2a2a2a;font-weight:normal;letter-spacing:0.1px;">1.7%</div>
<div class="t" style="left:21.00px;top:502.76px;font-size:21px;color:#2a2a2a;font-weight:bold;letter-spacing:0.15px;">2020 Actual</div>
<div class="t" style="left:1585.54px;width:108px;text-align:right;top:502.76px;font-size:21px;color:#2a2a2a;font-weight:bold;letter-spacing:-0.1px;">$170,700</div>
<div class="t" style="left:1697.12px;width:108px;text-align:right;top:502.76px;font-size:21px;color:#2a2a2a;font-weight:bold;letter-spacing:-0.1px;">$224,250</div>
<div class="t" style="left:1808.70px;width:108px;text-align:right;top:502.76px;font-size:21px;color:#2a2a2a;font-weight:bold;letter-spacing:-0.1px;">$279,750</div>
<div class="t" style="left:1920.28px;width:108px;text-align:right;top:502.76px;font-size:21px;color:#2a2a2a;font-weight:bold;letter-spacing:-0.1px;">$290,550</div>
<div class="t" style="left:2031.86px;width:108px;text-align:right;top:502.76px;font-size:21px;color:#2a2a2a;font-weight:bold;letter-spacing:-0.1px;">$271,500</div>
<div class="t" style="left:2143.44px;width:108px;text-align:right;top:502.76px;font-size:21px;color:#2a2a2a;font-weight:bold;letter-spacing:-0.1px;">$361,500</div>
<div class="t" style="left:21.00px;top:535.18px;font-size:21px;color:#2a2a2a;font-weight:normal;letter-spacing:0.15px;">Increase/(Decrease)</div>
<div class="t" style="left:246.58px;width:108px;text-align:right;top:535.18px;font-size:21px;color:#2a2a2a;font-weight:normal;letter-spacing:0.1px;">$205,700</div>
<div class="t" style="left:358.16px;width:108px;text-align:right;top:535.18px;font-size:21px;color:#2a2a2a;font-weight:normal;letter-spacing:0.1px;">$259,250</div>
<div class="t" style="left:469.74px;width:108px;text-align:right;top:535.18px;font-size:21px;color:#2a2a2a;font-weight:normal;letter-spacing:0.1px;">$314,750</div>
<div class="t" style="left:581.32px;width:108px;text-align:right;top:535.18px;font-size:21px;color:#2a2a2a;font-weight:normal;letter-spacing:0.1px;">$325,550</div>
<div class="t" style="left:692.90px;width:108px;text-align:right;top:535.18px;font-size:21px;color:#2a2a2a;font-weight:normal;letter-spacing:0.1px;">$306,500</div>
<div class="t" style="left:804.48px;width:108px;text-align:right;top:535.18px;font-size:21px;color:#2a2a2a;font-weight:normal;letter-spacing:0.1px;">$396,500</div>
<div class="t" style="left:916.06px;width:108px;text-align:right;top:535.18px;font-size:21px;color:#2a2a2a;font-weight:normal;letter-spacing:0.1px;">$339,200</div>
<div class="t" style="left:1027.64px;width:108px;text-align:right;top:535.18px;font-size:21px;color:#2a2a2a;font-weight:normal;letter-spacing:0.1px;">$329,450</div>
<div class="t" style="left:1139.22px;width:108px;text-align:right;top:535.18px;font-size:21px;color:#2a2a2a;font-weight:normal;letter-spacing:0.1px;">$264,350</div>
<div class="t" style="left:1250.80px;width:108px;text-align:right;top:535.18px;font-size:21px;color:#2a2a2a;font-weight:normal;letter-spacing:0.1px;">$234,650</div>
<div class="t" style="left:1362.38px;width:108px;text-align:right;top:535.18px;font-size:21px;color:#2a2a2a;font-weight:normal;letter-spacing:0.1px;">$146,750</div>
<div class="t" style="left:1473.96px;width:108px;text-align:right;top:535.18px;font-size:21px;color:#2a2a2a;font-weight:normal;letter-spacing:0.1px;">$144,650</div>
<div class="t" style="left:1585.54px;width:108px;text-align:right;top:535.18px;font-size:21px;color:#2a2a2a;font-weight:normal;letter-spacing:0.1px;">$140,900</div>
<div class="t" style="left:1697.12px;width:108px;text-align:right;top:535.18px;font-size:21px;color:#2a2a2a;font-weight:normal;letter-spacing:0.1px;">$86,600</div>
<div class="t" style="left:1808.70px;width:108px;text-align:right;top:535.18px;font-size:21px;color:#2a2a2a;font-weight:normal;letter-spacing:0.1px;">$39,650</div>
<div class="t" style="left:1920.28px;width:108px;text-align:right;top:535.18px;font-size:21px;color:#2a2a2a;font-weight:normal;letter-spacing:0.1px;">$24,950</div>
<div class="t" style="left:2031.86px;width:108px;text-align:right;top:535.18px;font-size:21px;color:#2a2a2a;font-weight:normal;letter-spacing:0.1px;">$137,600</div>
<div class="t" style="left:2143.44px;width:108px;text-align:right;top:535.18px;font-size:21px;color:#2a2a2a;font-weight:normal;letter-spacing:0.1px;">-$15,500</div>
<div class="t" style="left:21.00px;top:567.60px;font-size:21px;color:#2a2a2a;font-weight:normal;letter-spacing:0.15px;">% Increase/Decrease</div>
<div class="t" style="left:246.58px;width:108px;text-align:right;top:567.60px;font-size:21px;color:#2a2a2a;font-weight:normal;letter-spacing:0.1px;">0.0%</div>
<div class="t" style="left:358.16px;width:108px;text-align:right;top:567.60px;font-size:21px;color:#2a2a2a;font-weight:normal;letter-spacing:0.1px;">0.0%</div>
<div class="t" style="left:469.74px;width:108px;text-align:right;top:567.60px;font-size:21px;color:#2a2a2a;font-weight:normal;letter-spacing:0.1px;">0.0%</div>
<div class="t" style="left:581.32px;width:108px;text-align:right;top:567.60px;font-size:21px;color:#2a2a2a;font-weight:normal;letter-spacing:0.1px;">0.0%</div>
<div class="t" style="left:692.90px;width:108px;text-align:right;top:567.60px;font-size:21px;color:#2a2a2a;font-weight:normal;letter-spacing:0.1px;">0.0%</div>
<div class="t" style="left:804.48px;width:108px;text-align:right;top:567.60px;font-size:21px;color:#2a2a2a;font-weight:normal;letter-spacing:0.1px;">0.0%</div>
<div class="t" style="left:916.06px;width:108px;text-align:right;top:567.60px;font-size:21px;color:#2a2a2a;font-weight:normal;letter-spacing:0.1px;">0.0%</div>
<div class="t" style="left:1027.64px;width:108px;text-align:right;top:567.60px;font-size:21px;color:#2a2a2a;font-weight:normal;letter-spacing:0.1px;">0.0%</div>
<div class="t" style="left:1139.22px;width:108px;text-align:right;top:567.60px;font-size:21px;color:#2a2a2a;font-weight:normal;letter-spacing:0.1px;">0.0%</div>
<div class="t" style="left:1250.80px;width:108px;text-align:right;top:567.60px;font-size:21px;color:#2a2a2a;font-weight:normal;letter-spacing:0.1px;">0.0%</div>
<div class="t" style="left:1362.38px;width:108px;text-align:right;top:567.60px;font-size:21px;color:#2a2a2a;font-weight:normal;letter-spacing:0.1px;">0.0%</div>
<div class="t" style="left:1473.96px;width:108px;text-align:right;top:567.60px;font-size:21px;color:#2a2a2a;font-weight:normal;letter-spacing:0.1px;">0.0%</div>
<div class="t" style="left:1585.54px;width:108px;text-align:right;top:567.60px;font-size:21px;color:#2a2a2a;font-weight:normal;letter-spacing:0.1px;">82.5%</div>
<div class="t" style="left:1697.12px;width:108px;text-align:right;top:567.60px;font-size:21px;color:#2a2a2a;font-weight:normal;letter-spacing:0.1px;">38.6%</div>
<div class="t" style="left:1808.70px;width:108px;text-align:right;top:567.60px;font-size:21px;color:#2a2a2a;font-weight:normal;letter-spacing:0.1px;">14.2%</div>
<div class="t" style="left:1920.28px;width:108px;text-align:right;top:567.60px;font-size:21px;color:#2a2a2a;font-weight:normal;letter-spacing:0.1px;">8.6%</div>
<div class="t" style="left:2031.86px;width:108px;text-align:right;top:567.60px;font-size:21px;color:#2a2a2a;font-weight:normal;letter-spacing:0.1px;">50.7%</div>
<div class="t" style="left:21.00px;top:632.44px;font-size:21px;color:#2a2a2a;font-weight:normal;letter-spacing:0.15px;">2021 Budget</div>
<div class="t" style="left:1473.96px;width:108px;text-align:right;top:632.44px;font-size:21px;color:#2a2a2a;font-weight:normal;letter-spacing:0.1px;">$555,900</div>
<div class="t" style="left:1585.54px;width:108px;text-align:right;top:632.44px;font-size:21px;color:#2a2a2a;font-weight:normal;letter-spacing:0.1px;">$225,000</div>
<div class="t" style="left:1697.12px;width:108px;text-align:right;top:632.44px;font-size:21px;color:#2a2a2a;font-weight:normal;letter-spacing:0.1px;">$224,400</div>
<div class="t" style="left:1808.70px;width:108px;text-align:right;top:632.44px;font-size:21px;color:#2a2a2a;font-weight:normal;letter-spacing:0.1px;">$215,100</div>
<div class="t" style="left:1920.28px;width:108px;text-align:right;top:632.44px;font-size:21px;color:#2a2a2a;font-weight:normal;letter-spacing:0.1px;">$232,200</div>
<div class="t" style="left:2031.86px;width:108px;text-align:right;top:632.44px;font-size:21px;color:#2a2a2a;font-weight:normal;letter-spacing:0.1px;">$240,150</div>
<div class="t" style="left:2143.44px;width:108px;text-align:right;top:632.44px;font-size:21px;color:#2a2a2a;font-weight:normal;letter-spacing:0.1px;">$245,300</div>
<div class="t" style="left:21.00px;top:664.86px;font-size:21px;color:#2a2a2a;font-weight:bold;letter-spacing:0.15px;">2019 Actual</div>
<div class="t" style="left:246.58px;width:108px;text-align:right;top:664.86px;font-size:21px;color:#2a2a2a;font-weight:bold;letter-spacing:-0.1px;">$170,700</div>
<div class="t" style="left:358.16px;width:108px;text-align:right;top:664.86px;font-size:21px;color:#2a2a2a;font-weight:bold;letter-spacing:-0.1px;">$224,250</div>
<div class="t" style="left:469.74px;width:108px;text-align:right;top:664.86px;font-size:21px;color:#2a2a2a;font-weight:bold;letter-spacing:-0.1px;">$279,750</div>
<div class="t" style="left:581.32px;width:108px;text-align:right;top:664.86px;font-size:21px;color:#2a2a2a;font-weight:bold;letter-spacing:-0.1px;">$290,550</div>
<div class="t" style="left:692.90px;width:108px;text-align:right;top:664.86px;font-size:21px;color:#2a2a2a;font-weight:bold;letter-spacing:-0.1px;">$271,500</div>
<div class="t" style="left:804.48px;width:108px;text-align:right;top:664.86px;font-size:21px;color:#2a2a2a;font-weight:bold;letter-spacing:-0.1px;">$361,500</div>
<div class="t" style="left:916.06px;width:108px;text-align:right;top:664.86px;font-size:21px;color:#2a2a2a;font-weight:bold;letter-spacing:-0.1px;">$304,200</div>
<div class="t" style="left:1027.64px;width:108px;text-align:right;top:664.86px;font-size:21px;color:#2a2a2a;font-weight:bold;letter-spacing:-0.1px;">$294,450</div>
<div class="t" style="left:1139.22px;width:108px;text-align:right;top:664.86px;font-size:21px;color:#2a2a2a;font-weight:bold;letter-spacing:-0.1px;">$229,350</div>
<div class="t" style="left:1250.80px;width:108px;text-align:right;top:664.86px;font-size:21px;color:#2a2a2a;font-weight:bold;letter-spacing:-0.1px;">$199,650</div>
<div class="t" style="left:1362.38px;width:108px;text-align:right;top:664.86px;font-size:21px;color:#2a2a2a;font-weight:bold;letter-spacing:-0.1px;">$111,750</div>
<div class="t" style="left:1473.96px;width:108px;text-align:right;top:664.86px;font-size:21px;color:#2a2a2a;font-weight:bold;letter-spacing:-0.1px;">$109,650</div>
<div class="t" style="left:1585.54px;width:108px;text-align:right;top:664.86px;font-size:21px;color:#2a2a2a;font-weight:bold;letter-spacing:-0.1px;">$276,600</div>
<div class="t" style="left:1697.12px;width:108px;text-align:right;top:664.86px;font-size:21px;color:#2a2a2a;font-weight:bold;letter-spacing:-0.1px;">$275,850</div>
<div class="t" style="left:1808.70px;width:108px;text-align:right;top:664.86px;font-size:21px;color:#2a2a2a;font-weight:bold;letter-spacing:-0.1px;">$284,400</div>
<div class="t" style="left:1920.28px;width:108px;text-align:right;top:664.86px;font-size:21px;color:#2a2a2a;font-weight:bold;letter-spacing:-0.1px;">$280,500</div>
<div class="t" style="left:2031.86px;width:108px;text-align:right;top:664.86px;font-size:21px;color:#2a2a2a;font-weight:bold;letter-spacing:-0.1px;">$374,100</div>
<div class="t" style="left:2143.44px;width:108px;text-align:right;top:664.86px;font-size:21px;color:#2a2a2a;font-weight:bold;letter-spacing:-0.1px;">$345,200</div>
<div style="position:absolute;left:27.30000000000001px;top:708.5px;width:2400px;height:291.5px;background:#dce6f2;border:1.3px solid #8d9bab;box-sizing:border-box;"></div>
<div style="position:absolute;left:148.3px;top:738.8800000000001px;width:2200px;height:248.52px;background:#fff;"></div>
<div style="position:absolute;left:141px;top:986.5px;width:2200px;height:1.8px;background:#a3a3a3;"></div>
<div class="t" style="left:22.00px;width:110px;text-align:right;top:978.46px;font-size:18px;color:#3b3b3b;font-weight:normal;letter-spacing:1.0px;">$0</div>
<div style="position:absolute;left:141px;top:945.0799999999999px;width:2200px;height:1.8px;background:#a3a3a3;"></div>
<div class="t" style="left:22.00px;width:110px;text-align:right;top:937.04px;font-size:18px;color:#3b3b3b;font-weight:normal;letter-spacing:1.0px;">$100,000</div>
<div style="position:absolute;left:141px;top:903.6600000000001px;width:2200px;height:1.8px;background:#a3a3a3;"></div>
<div class="t" style="left:22.00px;width:110px;text-align:right;top:895.62px;font-size:18px;color:#3b3b3b;font-weight:normal;letter-spacing:1.0px;">$200,000</div>
<div style="position:absolute;left:141px;top:862.24px;width:2200px;height:1.8px;background:#a3a3a3;"></div>
<div class="t" style="left:22.00px;width:110px;text-align:right;top:854.20px;font-size:18px;color:#3b3b3b;font-weight:normal;letter-spacing:1.0px;">$300,000</div>
<div style="position:absolute;left:141px;top:820.8199999999999px;width:2200px;height:1.8px;background:#a3a3a3;"></div>
<div class="t" style="left:22.00px;width:110px;text-align:right;top:812.78px;font-size:18px;color:#3b3b3b;font-weight:normal;letter-spacing:1.0px;">$400,000</div>
<div style="position:absolute;left:141px;top:779.4000000000001px;width:2200px;height:1.8px;background:#a3a3a3;"></div>
<div class="t" style="left:22.00px;width:110px;text-align:right;top:771.36px;font-size:18px;color:#3b3b3b;font-weight:normal;letter-spacing:1.0px;">$500,000</div>
<div style="position:absolute;left:141px;top:737.98px;width:2200px;height:1.8px;background:#a3a3a3;"></div>
<div class="t" style="left:22.00px;width:110px;text-align:right;top:729.94px;font-size:18px;color:#3b3b3b;font-weight:normal;letter-spacing:1.0px;">$600,000</div>
<div style="position:absolute;left:147.5px;top:738.8800000000001px;width:1.6px;height:255.52px;background:#8c8c8c;"></div>
<div style="position:absolute;left:259.23px;top:987.4000000000001px;width:1.6px;height:7px;background:#8c8c8c;"></div>
<div style="position:absolute;left:369.76px;top:987.4000000000001px;width:1.6px;height:7px;background:#8c8c8c;"></div>
<div style="position:absolute;left:480.2900000000001px;top:987.4000000000001px;width:1.6px;height:7px;background:#8c8c8c;"></div>
<div style="position:absolute;left:590.82px;top:987.4000000000001px;width:1.6px;height:7px;background:#8c8c8c;"></div>
<div style="position:absolute;left:701.35px;top:987.4000000000001px;width:1.6px;height:7px;background:#8c8c8c;"></div>
<div style="position:absolute;left:811.8800000000001px;top:987.4000000000001px;width:1.6px;height:7px;background:#8c8c8c;"></div>
<div style="position:absolute;left:922.4100000000001px;top:987.4000000000001px;width:1.6px;height:7px;background:#8c8c8c;"></div>
<div style="position:absolute;left:1032.94px;top:987.4000000000001px;width:1.6px;height:7px;background:#8c8c8c;"></div>
<div style="position:absolute;left:1143.47px;top:987.4000000000001px;width:1.6px;height:7px;background:#8c8c8c;"></div>
<div style="position:absolute;left:1254.0px;top:987.4000000000001px;width:1.6px;height:7px;background:#8c8c8c;"></div>
<div style="position:absolute;left:1364.53px;top:987.4000000000001px;width:1.6px;height:7px;background:#8c8c8c;"></div>
<div style="position:absolute;left:1475.0600000000002px;top:987.4000000000001px;width:1.6px;height:7px;background:#8c8c8c;"></div>
<div style="position:absolute;left:1585.5900000000001px;top:987.4000000000001px;width:1.6px;height:7px;background:#8c8c8c;"></div>
<div style="position:absolute;left:1696.1200000000001px;top:987.4000000000001px;width:1.6px;height:7px;background:#8c8c8c;"></div>
<div style="position:absolute;left:1806.6499999999996px;top:987.4000000000001px;width:1.6px;height:7px;background:#8c8c8c;"></div>
<div style="position:absolute;left:1917.1799999999998px;top:987.4000000000001px;width:1.6px;height:7px;background:#8c8c8c;"></div>
<div style="position:absolute;left:2027.71px;top:987.4000000000001px;width:1.6px;height:7px;background:#8c8c8c;"></div>
<div style="position:absolute;left:2138.24px;top:987.4000000000001px;width:1.6px;height:7px;background:#8c8c8c;"></div>
<div style="position:absolute;left:2248.77px;top:987.4000000000001px;width:1.6px;height:7px;background:#8c8c8c;"></div>
<div style="position:absolute;left:164.5px;top:916.7px;width:20.4px;height:70.7px;background:#4f81bd;"></div>
<div style="position:absolute;left:225.7px;top:916.7px;width:20.4px;height:70.7px;background:#8064a2;"></div>
<div style="position:absolute;left:275.0px;top:894.5px;width:20.4px;height:92.9px;background:#4f81bd;"></div>
<div style="position:absolute;left:336.20000000000005px;top:894.5px;width:20.4px;height:92.9px;background:#8064a2;"></div>
<div style="position:absolute;left:385.6px;top:871.5px;width:20.4px;height:115.9px;background:#4f81bd;"></div>
<div style="position:absolute;left:446.79999999999995px;top:871.5px;width:20.4px;height:115.9px;background:#8064a2;"></div>
<div style="position:absolute;left:496.1px;top:867.0999999999999px;width:20.4px;height:120.3px;background:#4f81bd;"></div>
<div style="position:absolute;left:557.3px;top:867.0999999999999px;width:20.4px;height:120.3px;background:#8064a2;"></div>
<div style="position:absolute;left:606.6px;top:874.9000000000001px;width:20.4px;height:112.5px;background:#4f81bd;"></div>
<div style="position:absolute;left:667.8px;top:874.9000000000001px;width:20.4px;height:112.5px;background:#8064a2;"></div>
<div style="position:absolute;left:717.1px;top:837.7px;width:20.4px;height:149.7px;background:#4f81bd;"></div>
<div style="position:absolute;left:778.3px;top:837.7px;width:20.4px;height:149.7px;background:#8064a2;"></div>
<div style="position:absolute;left:827.7px;top:861.4000000000001px;width:20.4px;height:126.0px;background:#4f81bd;"></div>
<div style="position:absolute;left:888.9000000000001px;top:861.4000000000001px;width:20.4px;height:126.0px;background:#8064a2;"></div>
<div style="position:absolute;left:938.2px;top:865.4000000000001px;width:20.4px;height:122.0px;background:#4f81bd;"></div>
<div style="position:absolute;left:999.4000000000001px;top:865.4000000000001px;width:20.4px;height:122.0px;background:#8064a2;"></div>
<div style="position:absolute;left:1048.7px;top:892.4000000000001px;width:20.4px;height:95.0px;background:#4f81bd;"></div>
<div style="position:absolute;left:1109.9px;top:892.4000000000001px;width:20.4px;height:95.0px;background:#8064a2;"></div>
<div style="position:absolute;left:1159.3px;top:904.7px;width:20.4px;height:82.7px;background:#4f81bd;"></div>
<div style="position:absolute;left:1220.5px;top:904.7px;width:20.4px;height:82.7px;background:#8064a2;"></div>
<div style="position:absolute;left:1269.8px;top:941.0999999999999px;width:20.4px;height:46.3px;background:#4f81bd;"></div>
<div style="position:absolute;left:1331.0px;top:941.0999999999999px;width:20.4px;height:46.3px;background:#8064a2;"></div>
<div style="position:absolute;left:1380.3px;top:942.0px;width:20.4px;height:45.4px;background:#4f81bd;"></div>
<div style="position:absolute;left:1421.1px;top:757.0999999999999px;width:20.4px;height:230.3px;background:#9bbb59;"></div>
<div style="position:absolute;left:1441.5px;top:942.0px;width:20.4px;height:45.4px;background:#8064a2;"></div>
<div style="position:absolute;left:1490.9px;top:872.8px;width:20.4px;height:114.6px;background:#4f81bd;"></div>
<div style="position:absolute;left:1511.3px;top:916.7px;width:20.4px;height:70.7px;background:#c0504d;"></div>
<div style="position:absolute;left:1531.7px;top:894.2px;width:20.4px;height:93.2px;background:#9bbb59;"></div>
<div style="position:absolute;left:1552.1px;top:872.8px;width:20.4px;height:114.6px;background:#8064a2;"></div>
<div style="position:absolute;left:1601.4px;top:873.0999999999999px;width:20.4px;height:114.3px;background:#4f81bd;"></div>
<div style="position:absolute;left:1621.8px;top:894.5px;width:20.4px;height:92.9px;background:#c0504d;"></div>
<div style="position:absolute;left:1642.2px;top:894.5px;width:20.4px;height:92.9px;background:#9bbb59;"></div>
<div style="position:absolute;left:1662.6px;top:873.0999999999999px;width:20.4px;height:114.3px;background:#8064a2;"></div>
<div style="position:absolute;left:1711.9px;top:869.5999999999999px;width:20.4px;height:117.8px;background:#4f81bd;"></div>
<div style="position:absolute;left:1732.3px;top:871.5px;width:20.4px;height:115.9px;background:#c0504d;"></div>
<div style="position:absolute;left:1752.7px;top:898.3px;width:20.4px;height:89.1px;background:#9bbb59;"></div>
<div style="position:absolute;left:1773.1px;top:869.5999999999999px;width:20.4px;height:117.8px;background:#8064a2;"></div>
<div style="position:absolute;left:1822.4px;top:871.2px;width:20.4px;height:116.2px;background:#4f81bd;"></div>
<div style="position:absolute;left:1842.8000000000002px;top:867.0999999999999px;width:20.4px;height:120.3px;background:#c0504d;"></div>
<div style="position:absolute;left:1863.1999999999998px;top:891.2px;width:20.4px;height:96.2px;background:#9bbb59;"></div>
<div style="position:absolute;left:1883.6px;top:871.2px;width:20.4px;height:116.2px;background:#8064a2;"></div>
<div style="position:absolute;left:1933.0px;top:832.4000000000001px;width:20.4px;height:155.0px;background:#4f81bd;"></div>
<div style="position:absolute;left:1953.4px;top:874.9000000000001px;width:20.4px;height:112.5px;background:#c0504d;"></div>
<div style="position:absolute;left:1973.8000000000002px;top:887.9000000000001px;width:20.4px;height:99.5px;background:#9bbb59;"></div>
<div style="position:absolute;left:1994.1999999999998px;top:832.4000000000001px;width:20.4px;height:155.0px;background:#8064a2;"></div>
<div style="position:absolute;left:2043.5px;top:844.4000000000001px;width:20.4px;height:143.0px;background:#4f81bd;"></div>
<div style="position:absolute;left:2063.9px;top:837.7px;width:20.4px;height:149.7px;background:#c0504d;"></div>
<div style="position:absolute;left:2084.3px;top:887.8px;width:20.4px;height:99.6px;background:#9bbb59;"></div>
<div style="position:absolute;left:2104.7px;top:844.4000000000001px;width:20.4px;height:143.0px;background:#8064a2;"></div>
<div style="position:absolute;left:2154.0px;top:852.0px;width:20.4px;height:135.4px;background:#4f81bd;"></div>
<div style="position:absolute;left:2174.4px;top:861.4000000000001px;width:20.4px;height:126.0px;background:#c0504d;"></div>
<div style="position:absolute;left:2194.8px;top:888.0px;width:20.4px;height:99.4px;background:#9bbb59;"></div>
<div style="position:absolute;left:2215.2px;top:852.0px;width:20.4px;height:135.4px;background:#8064a2;"></div>
</div>
<div style="position:absolute;left:239.5px;top:458px;width:1.6px;height:291px;background:#8c8c8c;"></div>
<div style="position:absolute;left:239.5px;top:458px;width:10.5px;height:1.6px;background:#8c8c8c;"></div>
<div style="position:absolute;left:269.2px;top:472.8px;width:3px;height:3px;background:#8f8f8f;"></div>
<div style="position:absolute;left:269.2px;top:505.22px;width:3px;height:3px;background:#8f8f8f;"></div>
<div style="position:absolute;left:269.2px;top:537.64px;width:3px;height:3px;background:#8f8f8f;"></div>
<div style="position:absolute;left:269.2px;top:570.0600000000001px;width:3px;height:3px;background:#8f8f8f;"></div>
<div style="position:absolute;left:269.2px;top:602.48px;width:3px;height:3px;background:#8f8f8f;"></div>
<div style="position:absolute;left:269.2px;top:634.9000000000001px;width:3px;height:3px;background:#8f8f8f;"></div>
<div style="position:absolute;left:269.2px;top:667.32px;width:3px;height:3px;background:#8f8f8f;"></div>
<div style="position:absolute;left:269.2px;top:699.74px;width:3px;height:3px;background:#8f8f8f;"></div>
<div style="position:absolute;left:269.2px;top:732.1600000000001px;width:3px;height:3px;background:#8f8f8f;"></div>
<div style="position:absolute;left:227px;top:749px;width:28.5px;height:28.5px;background:#e6e6e6;border:1.4px solid #9a9a9a;box-sizing:border-box;"></div>
<div style="position:absolute;left:234.5px;top:762px;width:13.5px;height:2.6px;background:#777;"></div>
<div style="position:absolute;left:222px;top:1345.5px;width:2254px;height:50.5px;background:#e6e6e6;"></div>
<div style="position:absolute;left:222px;top:1345.5px;width:341px;height:1.4px;background:#9c9c9c;"></div>
<div style="position:absolute;left:775px;top:1345.5px;width:800px;height:1.4px;background:#9c9c9c;"></div>
<div style="position:absolute;left:2476px;top:1345px;width:41px;height:51px;background:#e9e9e9;"></div>
<svg style="left:269px;top:1364px" width="10" height="14" viewBox="0 0 10 14"><path d="M9 1 L1 7 L9 13Z" fill="#c0c0c0"/></svg>
<svg style="left:321px;top:1364px" width="10" height="14" viewBox="0 0 10 14"><path d="M1 1 L9 7 L1 13Z" fill="#c0c0c0"/></svg>
<div style="position:absolute;left:401.5px;top:1352.5px;width:1.6px;height:35.5px;background:#9a9a9a;"></div>
<div style="position:absolute;left:1060.5px;top:1352.5px;width:1.6px;height:35.5px;background:#9a9a9a;"></div>
<div style="position:absolute;left:1172px;top:1352.5px;width:1.6px;height:35.5px;background:#9a9a9a;"></div>
<div style="position:absolute;left:563.5px;top:1346px;width:212px;height:44px;background:#fff;"></div>
<div style="position:absolute;left:563.5px;top:1386.5px;width:212px;height:3.6px;background:#217346;"></div>
<div class="t" style="left:426.00px;top:1355.83px;font-size:23px;color:#444;font-weight:normal;letter-spacing:0.58px;">Utilization</div>
<div class="t" style="left:588.00px;top:1355.83px;font-size:23px;color:#217346;font-weight:bold;letter-spacing:0.62px;">Monthly Trend</div>
<div class="t" style="left:798.00px;top:1355.83px;font-size:23px;color:#444;font-weight:normal;letter-spacing:0.37px;">NonBillable for Week</div>
<div class="t" style="left:1084.50px;top:1355.83px;font-size:23px;color:#444;font-weight:normal;letter-spacing:0.1px;">Notes</div>
<div style="position:absolute;left:1548.5px;top:1363.5px;width:2.6px;height:2.6px;background:#999;"></div>
<div style="position:absolute;left:1548.5px;top:1371.5px;width:2.6px;height:2.6px;background:#999;"></div>
<div style="position:absolute;left:1548.5px;top:1379.5px;width:2.6px;height:2.6px;background:#999;"></div>
<div style="position:absolute;left:1602px;top:1359px;width:848px;height:25px;background:#dadada;"></div>
<div style="position:absolute;left:1576px;top:1358.5px;width:26px;height:25.5px;background:#fff;border:1px solid #c8c8c8;box-sizing:border-box;"></div>
<div style="position:absolute;left:1601px;top:1358.5px;width:130px;height:25.5px;background:#fff;border:1px solid #c8c8c8;box-sizing:border-box;"></div>
<svg style="left:1583px;top:1364px" width="9" height="14" viewBox="0 0 9 14"><path d="M8 1 L1 7 L8 13Z" fill="#6b6b6b"/></svg>
<div style="position:absolute;left:2451px;top:1358.5px;width:25.5px;height:25.5px;background:#fff;border:1px solid #c8c8c8;box-sizing:border-box;"></div>
<svg style="left:2460px;top:1364px" width="9" height="14" viewBox="0 0 9 14"><path d="M1 1 L8 7 L1 13Z" fill="#6b6b6b"/></svg>
</div>
<div id="border"></div>
</body></html>
